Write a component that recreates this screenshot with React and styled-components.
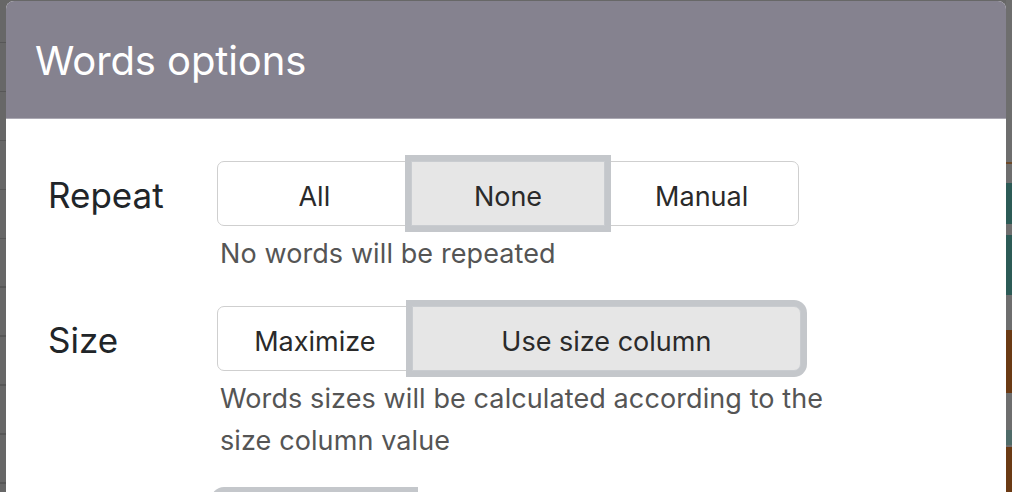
import React from "react";
import styled, { createGlobalStyle } from "styled-components";

const GlobalStyle = createGlobalStyle`
  html, body {
    margin: 0;
    padding: 0;
    width: 1012px;
    height: 492px;
    overflow: hidden;
    background: #666666;
  }
  * { box-sizing: border-box; }
`;

const Page = styled.div`
  display: flex;
  width: 1012px;
  height: 492px;
  padding-top: 1px;
  background: #676767;
  font-family: Inter, "Noto Sans", "Liberation Sans", sans-serif;
`;

const LeftStrip = styled.div`
  flex: 0 0 6px;
  margin-top: -1px;
  background-color: #676767;
  background-image: repeating-linear-gradient(
    to bottom,
    transparent 0px,
    transparent 42px,
    #575757 42px,
    #575757 43.5px,
    transparent 43.5px,
    transparent 48.9px
  );
`;

const RightStrip = styled.div`
  flex: 0 0 6px;
  margin-top: -1px;
  display: flex;
  flex-direction: column;
  background: #6e6e6e;
`;

const StripBlock = styled.div`
  height: ${(p) => p.$h}px;
  background: ${(p) => p.$c || "transparent"};
`;

const Modal = styled.div`
  flex: 1;
  display: flex;
  flex-direction: column;
  background: #ffffff;
  border-radius: 8px 8px 0 0;
  overflow: hidden;
`;

const Header = styled.div`
  height: 118px;
  flex: 0 0 118px;
  display: flex;
  align-items: center;
  padding-left: 29px;
  padding-top: 2px;
  background: #85828f;
  border-bottom: 1px solid #aba9b3;
`;

const Title = styled.h1`
  margin: 0;
  font-size: 40px;
  font-weight: 400;
  color: #ffffff;
  letter-spacing: -0.1px;
`;

const Body = styled.div`
  display: flex;
  flex-direction: column;
  gap: 31px;
  padding: 42px 0 0 42px;
`;

const Section = styled.div`
  display: grid;
  grid-template-columns: 169px auto;
  align-items: center;
`;

const Label = styled.div`
  font-size: 35px;
  color: #212529;
  font-weight: 400;
  padding-top: 3px;
`;

const Group = styled.div`
  display: flex;
  width: ${(p) => p.$w}px;
  height: 65px;
`;

const SegButton = styled.button`
  position: relative;
  flex: ${(p) => p.$grow || 1} 1 0;
  margin: 0;
  margin-left: -1px;
  padding: 5px 0 0;
  font-family: inherit;
  font-size: 27px;
  color: #2a2a2a;
  background: ${(p) => (p.$active ? "#e6e6e6" : "#ffffff")};
  border: 1px solid ${(p) => (p.$active ? "#c9ccd0" : "#cfcfcf")};
  border-radius: 0;
  z-index: ${(p) => (p.$active ? 1 : 0)};
  box-shadow: ${(p) => (p.$active ? "0 0 0 6px #c4c7cb" : "none")};
  cursor: pointer;

  &:first-child {
    margin-left: 0;
    border-radius: 7px 0 0 7px;
  }
  &:last-child {
    border-radius: 0 7px 7px 0;
  }
`;

const Help = styled.div`
  grid-column: 2;
  margin-top: 7px;
  padding-left: 3px;
  width: 640px;
  font-size: 27px;
  line-height: 42px;
  letter-spacing: 0.1px;
  color: #555555;
`;

const sections = [
  {
    label: "Repeat",
    width: 582,
    options: [{ t: "All" }, { t: "None", active: true }, { t: "Manual" }],
    help: "No words will be repeated",
  },
  {
    label: "Size",
    width: 584,
    options: [{ t: "Maximize" }, { t: "Use size column", active: true, grow: 2 }],
    help: "Words sizes will be calculated according to the size column value",
  },
  {
    label: "",
    width: 582,
    options: [{ t: "", id: "a", active: true }, { t: "", id: "b" }, { t: "", id: "c" }],
    help: "",
  },
];

export default function App() {
  return (
    <>
      <GlobalStyle />
      <Page>
        <LeftStrip />
        <Modal>
          <Header>
            <Title>Words options</Title>
          </Header>
          <Body>
            {sections.map((s, i) => (
              <Section key={i}>
                <Label>{s.label}</Label>
                <Group $w={s.width}>
                  {s.options.map((o, j) => (
                    <SegButton key={j} $active={o.active} $grow={o.grow}>
                      {o.t}
                    </SegButton>
                  ))}
                </Group>
                {s.help && <Help>{s.help}</Help>}
              </Section>
            ))}
          </Body>
        </Modal>
        <RightStrip>
          <StripBlock $h={162} />
          <StripBlock $h={2} $c="#6e4a2a" />
          <StripBlock $h={19} />
          <StripBlock $h={41} $c="#2c5b56" />
          <StripBlock $h={11} />
          <StripBlock $h={60} $c="#2c5b56" />
          <StripBlock $h={35} />
          <StripBlock $h={63} $c="#6b3a14" />
          <StripBlock $h={37} />
          <StripBlock $h={15} $c="#4f6b68" />
          <StripBlock $h={2} />
          <StripBlock $h={45} $c="#6b3a14" />
        </RightStrip>
      </Page>
    </>
  );
}
